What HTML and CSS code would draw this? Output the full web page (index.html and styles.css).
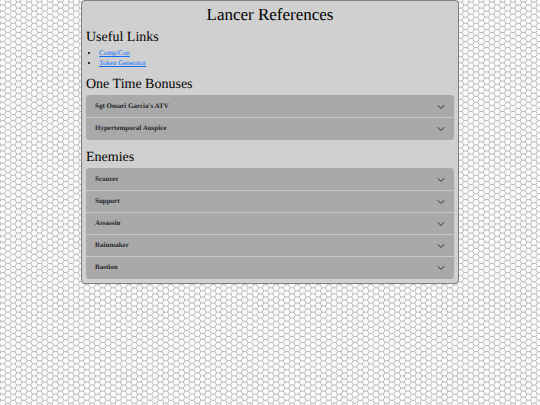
FILE: index.html
```html
<!DOCTYPE html>
<html lang="en">
<head>
<meta charset="utf-8">
<meta name="viewport" content="width=device-width, initial-scale=1">
<title>Lancer References</title>
<link rel="stylesheet" href="styles.css">
<script src="backdrop.js" defer></script>
</head>
<body>
<svg class="backdrop" aria-hidden="true"><path id="hexes"/></svg>
<svg class="sprite" aria-hidden="true">
  <symbol id="chevron" viewBox="0 0 16 16">
    <path d="M2 5l6 6 6-6" fill="none" stroke="#212529" stroke-width="1.8" stroke-linecap="round" stroke-linejoin="round"/>
  </symbol>
</svg>
<main class="panel">
  <h1>Lancer References</h1>
  <section>
    <h2>Useful Links</h2>
    <ul class="links">
      <li><a href="#compcon">Comp/Con</a></li>
      <li><a href="#tokens">Token Generator</a></li>
    </ul>
  </section>
  <section>
    <h2>One Time Bonuses</h2>
    <div class="accordion">
      <button type="button" aria-expanded="false">Sgt Omari Garcia's ATV<svg class="chevron" aria-hidden="true"><use href="#chevron"/></svg></button>
      <button type="button" aria-expanded="false">Hypertemporal Auspice<svg class="chevron" aria-hidden="true"><use href="#chevron"/></svg></button>
    </div>
  </section>
  <section class="enemies">
    <h2>Enemies</h2>
    <div class="accordion">
      <button type="button" aria-expanded="false">Scourer<svg class="chevron" aria-hidden="true"><use href="#chevron"/></svg></button>
      <button type="button" aria-expanded="false">Support<svg class="chevron" aria-hidden="true"><use href="#chevron"/></svg></button>
      <button type="button" aria-expanded="false">Assassin<svg class="chevron" aria-hidden="true"><use href="#chevron"/></svg></button>
      <button type="button" aria-expanded="false">Rainmaker<svg class="chevron" aria-hidden="true"><use href="#chevron"/></svg></button>
      <button type="button" aria-expanded="false">Bastion<svg class="chevron" aria-hidden="true"><use href="#chevron"/></svg></button>
    </div>
  </section>
</main>
</body>
</html>
```
FILE: backdrop.js
```js
// Fills the window with a flat-topped hexagon grid.
const column = 5.26;
const row = 6.08;
const side = column / 1.5;

function drawHexes() {
  let d = "";
  for (let i = -1; i * column < innerWidth + column; i++) {
    const x = 2.7 + i * column;
    const shift = i % 2 ? row / 2 : 0;
    for (let y = -row - 1 + shift; y < innerHeight + row; y += row) {
      d += `M${x - side},${y + row / 2}L${x - side / 2},${y}H${x + side / 2}L${x + side},${y + row / 2}`;
    }
  }
  document.getElementById("hexes").setAttribute("d", d);
}

drawHexes();
addEventListener("resize", drawHexes);
```
FILE: styles.css
```css
* {
  box-sizing: border-box;
}

body {
  margin: 0;
  background: #fcfcfc;
  color: #000;
  font-family: "Liberation Serif", "Times New Roman", serif;
  font-size: 7px;
  text-rendering: geometricPrecision;
}

.backdrop {
  position: fixed;
  inset: 0;
  z-index: -1;
  width: 100%;
  height: 100%;
  fill: none;
  stroke: #b8b8b8;
  stroke-width: 1px;
}

.sprite {
  display: none;
}

.panel {
  width: 70%;
  margin: 0 auto;
  padding: 4px;
  border: 1px solid #808080;
  border-radius: 4px;
  background: #d0d0d0;
}

h1,
h2 {
  margin: 0;
  font-weight: 400;
}

h1 {
  margin-bottom: 3px;
  font-size: 17px;
  line-height: 20px;
  text-align: center;
}

h2 {
  font-size: 14px;
  line-height: 20px;
}

section + section {
  margin-top: 7px;
}

section.enemies {
  margin-top: 8px;
}

.links {
  margin: 0;
  padding-left: 13px;
  line-height: 10px;
}

.links a {
  color: #0d6efd;
}

.accordion {
  display: grid;
  gap: 1px;
  overflow: hidden;
  border: 0 solid #a9a9a9;
  border-width: 1px 0;
  border-radius: 3px;
  background: #c8c8c8;
}

.accordion button {
  display: flex;
  align-items: center;
  justify-content: space-between;
  width: 100%;
  padding: 5px 9px;
  border: 0;
  background: #a9a9a9;
  color: #212529;
  font: 700 7px/11px "Liberation Serif", "Times New Roman", serif;
  text-align: left;
  text-rendering: inherit;
}

.chevron {
  width: 8px;
  height: 8px;
}
```
